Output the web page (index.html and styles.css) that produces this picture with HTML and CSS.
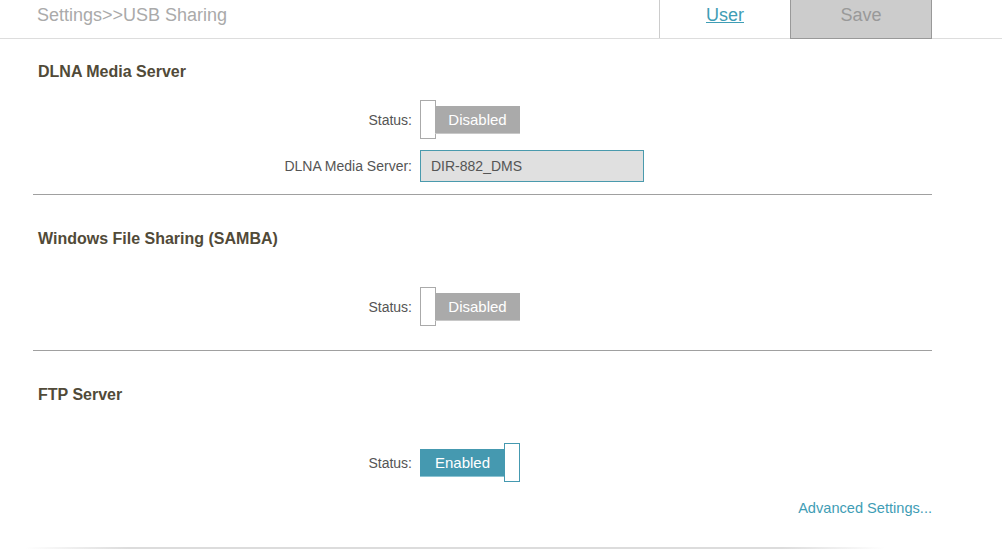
FILE: index.html
```html
<!DOCTYPE html>
<html lang="en">
<head>
    <meta charset="UTF-8">
    <meta name="viewport" content="width=device-width, initial-scale=1.0">
    <title>USB Sharing</title>
    <link rel="stylesheet" href="styles.css">
</head>
<body>
    <div class="header">
        <div class="header-inner">
            <div class="crumb">Settings&gt;&gt;USB Sharing</div>
            <div class="nav">
                <a class="nav-user" href="#">User</a>
                <div class="nav-save">Save</div>
            </div>
        </div>
    </div>

    <div class="main">
        <div class="section first">
            <div class="section-title">DLNA Media Server</div>
            <div class="row">
                <div class="label">Status:</div>
                <div class="toggle off">
                    <span class="knob"></span>
                    <span class="bar">Disabled</span>
                </div>
            </div>
            <div class="row row-input">
                <div class="label">DLNA Media Server:</div>
                <input class="field" type="text" value="DIR-882_DMS" readonly>
            </div>
        </div>

        <div class="section">
            <div class="section-title">Windows File Sharing (SAMBA)</div>
            <div class="row spaced">
                <div class="label">Status:</div>
                <div class="toggle off">
                    <span class="knob"></span>
                    <span class="bar">Disabled</span>
                </div>
            </div>
        </div>

        <div class="section last">
            <div class="section-title">FTP Server</div>
            <div class="row spaced">
                <div class="label">Status:</div>
                <div class="toggle on">
                    <span class="bar">Enabled</span>
                    <span class="knob"></span>
                </div>
            </div>
            <div class="advanced"><a href="#">Advanced Settings...</a></div>
        </div>
    </div>
    <div class="footer-line"></div>
</body>
</html>
```

FILE: styles.css
```css
body {
    margin: 0;
    font-family: "Liberation Sans", Arial, sans-serif;
    background: #fff;
    color: #555;
}
.header {
    border-bottom: 1px solid #ddd;
}
.header-inner {
    width: 899px;
    margin-left: 33px;
    height: 38px;
    display: flex;
    justify-content: space-between;
}
.crumb {
    padding-left: 4px;
    font-size: 18px;
    line-height: 30px;
    color: #aaa;
}
.nav {
    display: flex;
}
.nav-user {
    width: 130px;
    border-left: 1px solid #ccc;
    text-align: center;
    font-size: 18px;
    line-height: 30px;
    color: #3f9db5;
}
.nav-save {
    box-sizing: border-box;
    width: 142px;
    height: 39px;
    background-color: #ccc;
    border: 1px solid #999;
    border-top: none;
    text-align: center;
    font-size: 18px;
    line-height: 30px;
    color: #999;
}
.main {
    width: 899px;
    margin-left: 33px;
}
.section {
    border-bottom: 1px solid #a0a0a0;
    padding-top: 34px;
    padding-bottom: 24px;
}
.section.first {
    padding-top: 23px;
    padding-bottom: 12px;
}
.section.last {
    border-bottom: none;
    padding-bottom: 30px;
}
.section-title {
    padding-left: 5px;
    font-size: 16px;
    font-weight: bold;
    line-height: 20px;
    color: #514a38;
}
.row {
    display: grid;
    grid-template-columns: 379px auto;
    column-gap: 8px;
    align-items: center;
    margin-top: 18px;
}
.row.spaced {
    margin-top: 38px;
}
.row-input {
    margin-top: 11px;
}
.label {
    text-align: right;
    font-size: 14px;
    color: #555;
}
.toggle {
    display: flex;
    align-items: center;
    width: 100px;
    height: 39px;
}
.knob {
    box-sizing: border-box;
    width: 16px;
    height: 39px;
    background: #fff;
    border: 1px solid #aaa;
}
.bar {
    box-sizing: border-box;
    width: 85px;
    height: 28px;
    line-height: 28px;
    text-align: center;
    font-size: 15px;
    color: #fff;
    background-color: #aaa;
    border-bottom: 1px solid #c8c8c8;
}
.toggle.off .bar {
    margin-left: -1px;
}
.toggle.on .bar {
    background-color: #4599b0;
    border-bottom-color: #8cc3d2;
}
.toggle.on .knob {
    border-color: #4599b0;
    margin-left: -1px;
}
.field {
    box-sizing: border-box;
    width: 224px;
    height: 32px;
    padding: 0 0 0 10px;
    margin: 0;
    background-color: #e0e0e0;
    border: 1px solid #4a9aad;
    font-family: "Liberation Sans", Arial, sans-serif;
    font-size: 14px;
    color: #555;
    outline: none;
}
.advanced {
    margin-top: 17px;
    text-align: right;
    font-size: 14.6px;
    line-height: 18px;
}
.advanced a {
    color: #3f9db5;
    text-decoration: none;
}
.footer-line {
    width: 860px;
    margin-left: 25px;
    height: 2px;
    background: linear-gradient(to right, rgba(221,221,221,0), #dcdcdc 12%, #dcdcdc 88%, rgba(221,221,221,0));
}
```
